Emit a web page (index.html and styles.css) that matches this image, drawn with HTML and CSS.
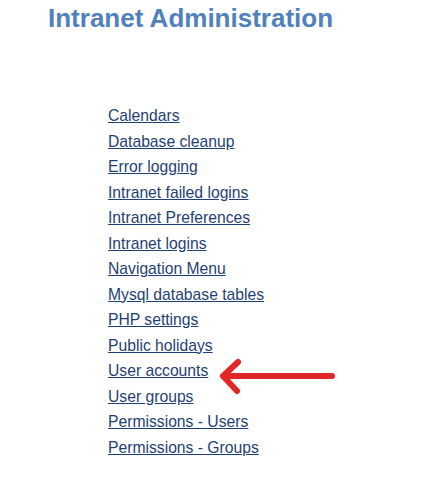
FILE: index.html
```html
<!DOCTYPE html>
<html>
<head>
<meta charset="utf-8">
<title>Intranet Administration</title>
<link rel="stylesheet" href="styles.css">
</head>
<body>
<div class="page">
  <h1 class="title">Intranet Administration</h1>
  <ul class="menu">
    <li><a href="#">Calendars</a></li>
    <li><a href="#">Database cleanup</a></li>
    <li><a href="#">Error logging</a></li>
    <li><a href="#">Intranet failed logins</a></li>
    <li><a href="#">Intranet Preferences</a></li>
    <li><a href="#">Intranet logins</a></li>
    <li><a href="#">Navigation Menu</a></li>
    <li><a href="#">Mysql database tables</a></li>
    <li><a href="#">PHP settings</a></li>
    <li><a href="#">Public holidays</a></li>
    <li class="marked"><a href="#">User accounts</a>
      <svg class="arrow" width="125" height="40" viewBox="0 0 125 40">
        <path d="M116 19 L7 19 M22 5 L7 19 L21 34" fill="none" stroke="#e22727" stroke-width="6" stroke-linecap="round" stroke-linejoin="round"/>
      </svg>
    </li>
    <li><a href="#">User groups</a></li>
    <li><a href="#">Permissions - Users</a></li>
    <li><a href="#">Permissions - Groups</a></li>
  </ul>
</div>
</body>
</html>
```

FILE: styles.css
```css
html, body {
  margin: 0;
  padding: 0;
  background: #ffffff;
}
.page {
  padding: 4px 0 0 48px;
  font-family: "Liberation Sans", Arial, sans-serif;
}
.title {
  margin: 0;
  font-size: 26px;
  line-height: 29px;
  font-weight: bold;
  color: #4f81bd;
}
.menu {
  list-style: none;
  margin: 70px 0 0 60px;
  padding: 0;
}
.menu li {
  font-size: 15.7px;
  line-height: 25.5px;
  position: relative;
}
.menu a {
  color: #1f3f73;
  text-decoration: underline;
}
.arrow {
  position: absolute;
  left: 108px;
  top: -1px;
}
```
